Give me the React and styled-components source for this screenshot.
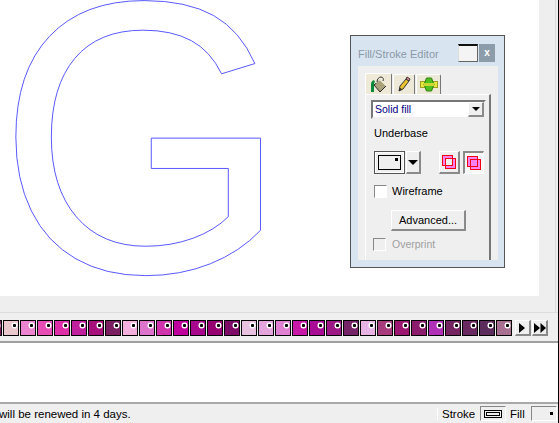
import React from 'react';
import styled, { createGlobalStyle, css } from 'styled-components';

const GlobalStyle = createGlobalStyle`
  html, body {
    margin: 0;
    padding: 0;
    background: #fff;
  }
  body {
    font-family: "Liberation Sans", Arial, sans-serif;
    font-size: 11px;
    color: #000;
  }
`;

const raised = css`
  background: #efefef;
  border-style: solid;
  border-width: 1px 2px 2px 1px;
  border-color: #fff #8a8a8a #8a8a8a #fff;
  box-sizing: border-box;
`;

const Screen = styled.div`
  width: 559px;
  height: 423px;
  box-sizing: border-box;
  border-right: 1px solid #000;
  display: flex;
  flex-direction: column;
  overflow: hidden;
`;

const Workspace = styled.div`
  position: relative;
  height: 313px;
  box-sizing: border-box;
  background: #eeeeee;
  border-bottom: 1px solid #dcdcdc;
`;

const Canvas = styled.div`
  width: 539px;
  height: 296px;
  background: #fff;
`;

const Art = styled.svg`
  display: block;
`;

const EdgeLine = styled.div`
  position: absolute;
  top: 0;
  right: 2px;
  width: 1px;
  height: 312px;
  background: #dcdcdc;
`;

const Panel = styled.div`
  position: absolute;
  left: 350px;
  top: 35px;
  width: 155px;
  height: 233px;
  box-sizing: border-box;
  border: 1px solid #555;
  background: #d8e4f0;
  padding: 8px 6px 7px 7px;
  display: flex;
  flex-direction: column;
`;

const TitleBar = styled.div`
  height: 22px;
  display: flex;
  align-items: flex-start;
`;

const Title = styled.span`
  flex: 1;
  color: #8b9aa8;
  font-size: 11px;
  line-height: 21px;
`;

const MinButton = styled.div`
  width: 20px;
  height: 18px;
  box-sizing: border-box;
  background: #f4f4f4;
  border-style: solid;
  border-width: 2px 1px 1px 1px;
  border-color: #111 #666 #666 #ddd;
`;

const CloseButton = styled.div`
  width: 16px;
  height: 18px;
  margin-left: 1px;
  margin-right: 3px;
  background: #8d9ca9;
  color: #fff;
  font: bold 10px/17px "Liberation Sans", sans-serif;
  text-align: center;
`;

const Body = styled.div`
  flex: 1;
  background: #efefef;
  padding: 8px 7px 0;
  display: flex;
  flex-direction: column;
`;

const Tabs = styled.div`
  display: flex;
  height: 20px;
  gap: 1px;
`;

const Tab = styled.div`
  width: ${p => p.$wide}px;
  box-sizing: border-box;
  border: 1px solid #fff;
  border-right: 1px solid #777;
  border-bottom: none;
  border-radius: 2px 2px 0 0;
  background: #ece9d8;
  display: flex;
  align-items: center;
  justify-content: center;
  ${p => p.$active && css`
    height: 21px;
    margin-top: -1px;
    background: #efe9d8;
  `}
`;

const Pane = styled.div`
  flex: 1;
  border-top: 1px solid #fff;
  border-left: 1px solid #fff;
  border-right: 2px solid #777;
  padding: 5px 4px 0 5px;
  display: flex;
  flex-direction: column;
`;

const Select = styled.div`
  width: 115px;
  height: 19px;
  box-sizing: border-box;
  background: #fff;
  border: 2px solid;
  border-color: #777 #eee #eee #777;
  display: flex;
  align-items: stretch;
`;

const SelectText = styled.span`
  flex: 1;
  padding-left: 2px;
  color: #000080;
  line-height: 15px;
  font-size: 10.5px;
`;

const SelectArrow = styled.div`
  width: 16px;
  ${raised}
  display: flex;
  align-items: center;
  justify-content: center;
`;

const Arrow = styled.div`
  width: 0;
  height: 0;
  border-left: ${p => p.$size}px solid transparent;
  border-right: ${p => p.$size}px solid transparent;
  border-top: ${p => p.$size}px solid #000;
`;

const SectionLabel = styled.div`
  margin: 7px 0 0 3px;
  line-height: 15px;
`;

const ToolRow = styled.div`
  display: flex;
  height: 23px;
  margin: 10px 0 0 3px;
`;

const ColorWell = styled.div`
  width: 31px;
  box-sizing: border-box;
  border: 1px solid #555;
  outline: 1px solid #fff;
  outline-offset: -2px;
  padding: 3px;
  display: flex;
`;

const WellInner = styled.div`
  flex: 1;
  position: relative;
  border: 1px solid #000;
  background: #efefef;
  &::after {
    content: '';
    position: absolute;
    top: 2px;
    right: 2px;
    width: 3px;
    height: 3px;
    background: #000;
  }
`;

const DropButton = styled.div`
  width: 15px;
  margin-left: 1px;
  ${raised}
  display: flex;
  align-items: center;
  justify-content: center;
`;

const ModeButton = styled.div`
  width: 21px;
  margin-left: ${p => p.$gap}px;
  box-sizing: border-box;
  border-style: solid;
  border-width: 1px 2px 2px 1px;
  border-color: #fff #8a8a8a #8a8a8a #fff;
  background: #efefef;
  display: flex;
  align-items: center;
  justify-content: center;
  ${p => p.$down && css`
    border-color: #8a8a8a #fff #fff #8a8a8a;
    border-width: 2px 1px 1px 2px;
    background: #f8f8f8;
  `}
`;

const CheckRow = styled.div`
  display: flex;
  align-items: center;
  height: 13px;
  line-height: 13px;
  margin: ${p => p.$top}px 0 0 ${p => p.$left}px;
  color: ${p => (p.$off ? '#a0a0a0' : '#000')};
  font-size: ${p => (p.$off ? '10.5px' : '11px')};
`;

const Box = styled.div`
  width: 13px;
  height: 13px;
  box-sizing: border-box;
  border: 1px solid;
  border-color: #888 #fff #fff #888;
  background: ${p => (p.$off ? '#efefef' : '#fff')};
  margin-right: ${p => p.$gap}px;
`;

const AdvancedButton = styled.div`
  width: 75px;
  height: 21px;
  margin: 12px 0 0 20px;
  ${raised}
  text-align: center;
  line-height: 18px;
`;

const SwatchBar = styled.div`
  height: 30px;
  box-sizing: border-box;
  background: #efefef;
  border-bottom: 2px solid #a0a0a0;
  display: flex;
  align-items: flex-start;
  padding-top: 7px;
`;

const SwatchRow = styled.div`
  display: flex;
  gap: 1px;
  margin-left: -14px;
`;

const Swatch = styled.div`
  position: relative;
  width: 16px;
  height: 16px;
  box-sizing: border-box;
  border: 1px solid #000;
  background: ${p => p.$color};
  &::after {
    content: '';
    position: absolute;
    top: 3px;
    left: 9px;
    width: 3px;
    height: 3px;
    border-radius: 1px;
    background: #000;
    box-shadow: 0 0 0 1.5px #fff;
  }
`;

const ScrollButtons = styled.div`
  display: flex;
  gap: 1px;
  margin-left: 3px;
`;

const ScrollButton = styled.div`
  width: 16px;
  height: 16px;
  ${raised}
  display: flex;
  align-items: center;
  justify-content: center;
`;

const BlankArea = styled.div`
  flex: 1;
  background: #fff;
`;

const StatusBar = styled.div`
  height: 21px;
  box-sizing: border-box;
  background: #efefef;
  border-top: 2px solid #a8a8a8;
  display: flex;
  align-items: center;
  font-size: 11.5px;
`;

const StatusText = styled.div`
  flex: 1;
  margin-left: -1px;
  white-space: nowrap;
`;

const StatusLabel = styled.div`
  width: ${p => p.$wide}px;
  padding-left: 4px;
  box-sizing: border-box;
  border-left: ${p => (p.$sep ? '1px solid #fff' : 'none')};
`;

const StatusWell = styled.div`
  width: 26px;
  height: 15px;
  box-sizing: border-box;
  border: 1px solid;
  border-color: #888 #fff #fff #888;
  display: flex;
  align-items: center;
  justify-content: center;
  margin-right: ${p => p.$end}px;
`;

const StrokeMark = styled.div`
  width: 18px;
  height: 8px;
  box-sizing: border-box;
  border: 1px solid #000;
  outline: 1px solid #000;
  outline-offset: -3px;
`;

const FillMark = styled.div`
  width: 3px;
  height: 3px;
  background: #000;
  margin-left: 14px;
  margin-bottom: 1px;
`;

const colors = [
  '#7a1a5a', '#e8c8cc', '#ec84d0', '#e64eb6', '#de2ea8', '#c0209c', '#a8107c', '#7a2060',
  '#f4b0dc', '#dc74cc', '#d034ac', '#c0009c', '#a8088c', '#960070', '#7c0c66', '#e8c0e0',
  '#e4a4dc', '#e080d0', '#c818a8', '#a80c94', '#9c1884', '#762468', '#e8b4e4', '#a83c7c',
  '#9c1870', '#8c1c6c', '#b030b8', '#742460', '#682860', '#5c2c5c', '#a87090',
];

const BucketIcon = () => (
  <svg width="18" height="17" viewBox="0 0 18 17">
    <path d="M1 16V8c0-2 1-3 3-4l1 2C4 7 4 8 4 9v7z" fill="#0a8a3a" />
    <path d="M4 9l6-5 6 6-6 6z" fill="#a9a27a" stroke="#2a2a2a" />
    <path d="M6 7l4-3 6 6" fill="none" stroke="#e8e4c8" strokeWidth="1" />
    <path d="M7 6c0-3 2-5 4-5s3 2 2 4" fill="none" stroke="#333" />
  </svg>
);

const PencilIcon = () => (
  <svg width="14" height="17" viewBox="0 0 14 17">
    <path d="M2 15l1-5 6-7 3 2-6 8z" fill="#e8c030" stroke="#333" />
    <path d="M9 3l1-2 3 2-1 2z" fill="#e88a9a" stroke="#333" />
    <path d="M2 15l1-3 2 1z" fill="#222" />
  </svg>
);

const ShapeIcon = () => (
  <svg width="18" height="15" viewBox="0 0 18 15">
    <rect x="0.5" y="4.5" width="17" height="6" fill="#e8e840" stroke="#a0a020" />
    <path d="M4 7.5L6.5 1h5L14 7.5 11.5 14h-5z" fill="#50c020" stroke="#308010" />
    <rect x="4" y="6" width="10" height="3" fill="#c8d830" />
  </svg>
);

const OverlapIcon = ({ front }) => (
  <svg width="14" height="14" viewBox="0 0 14 14">
    <rect x="0.5" y="0.5" width="10" height="10" fill="#ff80f0" />
    <rect x="3.5" y="3.5" width="10" height="10" fill="#ff80f0" />
    {!front && <rect x="3.5" y="3.5" width="7" height="7" fill="#efefef" />}
    <rect x="0.5" y="0.5" width="10" height="10" fill="none" stroke="#f00014" />
    <rect x="3.5" y="3.5" width="10" height="10" fill="none" stroke="#f00014" />
  </svg>
);

const PlayIcon = ({ count }) => (
  <svg width={count === 2 ? 12 : 7} height="10" viewBox={count === 2 ? '0 0 12 10' : '0 0 7 10'}>
    <path d="M0 0l6 5-6 5z" fill="#000" />
    {count === 2 && <path d="M6.5 0l5.5 5-5.5 5z" fill="#000" />}
  </svg>
);

export default function App() {
  return (
    <>
      <GlobalStyle />
      <Screen>
        <Workspace>
          <Canvas>
            <Art width="539" height="296" viewBox="0 0 539 296">
              <text
                x="0"
                y="0"
                transform="translate(-3 271.85) scale(1.013 1.05)"
                fontFamily="Liberation Sans"
                fontSize="370"
                fill="none"
                stroke="#5555ff"
                strokeWidth="0.95"
              >
                G
              </text>
            </Art>
          </Canvas>
          <EdgeLine />
          <Panel>
            <TitleBar>
              <Title>Fill/Stroke Editor</Title>
              <MinButton />
              <CloseButton>x</CloseButton>
            </TitleBar>
            <Body>
              <Tabs>
                <Tab $wide={27} $active><BucketIcon /></Tab>
                <Tab $wide={22}><PencilIcon /></Tab>
                <Tab $wide={25}><ShapeIcon /></Tab>
              </Tabs>
              <Pane>
                <Select>
                  <SelectText>Solid fill</SelectText>
                  <SelectArrow><Arrow $size={4} /></SelectArrow>
                </Select>
                <SectionLabel>Underbase</SectionLabel>
                <ToolRow>
                  <ColorWell><WellInner /></ColorWell>
                  <DropButton><Arrow $size={5} /></DropButton>
                  <ModeButton $gap={18}><OverlapIcon /></ModeButton>
                  <ModeButton $gap={3} $down><OverlapIcon front /></ModeButton>
                </ToolRow>
                <CheckRow $top={11} $left={3}>
                  <Box $gap={5} />
                  Wireframe
                </CheckRow>
                <AdvancedButton>Advanced...</AdvancedButton>
                <CheckRow $top={7} $left={2} $off>
                  <Box $gap={6} $off />
                  Overprint
                </CheckRow>
              </Pane>
            </Body>
          </Panel>
        </Workspace>
        <SwatchBar>
          <SwatchRow>
            {colors.map((c, i) => <Swatch key={i} $color={c} />)}
          </SwatchRow>
          <ScrollButtons>
            <ScrollButton><PlayIcon count={1} /></ScrollButton>
            <ScrollButton><PlayIcon count={2} /></ScrollButton>
          </ScrollButtons>
        </SwatchBar>
        <BlankArea />
        <StatusBar>
          <StatusText>will be renewed in 4 days.</StatusText>
          <StatusLabel $wide={43} $sep>Stroke</StatusLabel>
          <StatusWell $end={0}><StrokeMark /></StatusWell>
          <StatusLabel $wide={25}>Fill</StatusLabel>
          <StatusWell $end={1}><FillMark /></StatusWell>
        </StatusBar>
      </Screen>
    </>
  );
}
